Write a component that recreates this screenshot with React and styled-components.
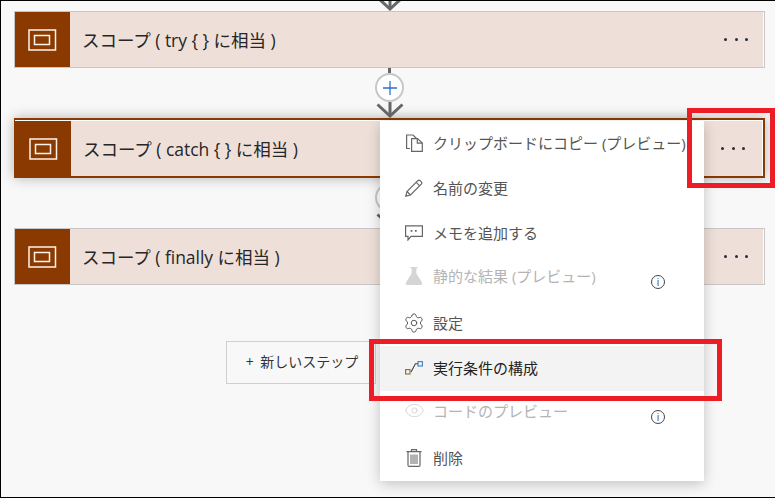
import styled, { createGlobalStyle } from "styled-components";
import { Settings, Eye } from "lucide-react";

const GlobalStyle = createGlobalStyle`
  html, body {
    margin: 0;
    padding: 0;
    background: #f8f8f8;
  }
  * {
    box-sizing: border-box;
  }
`;

const FONT = `"Open Sans", "Noto Sans CJK JP", sans-serif`;

const ScopeIcon = () => (
  <svg width="29" height="22" viewBox="0 0 29 22" fill="none" stroke="#fdf3ec" strokeWidth="1.5">
    <rect x="1" y="1" width="26.5" height="20" />
    <rect x="6.5" y="6.5" width="15" height="9" />
  </svg>
);

const Arrow = () => (
  <svg width="30" height="16" viewBox="0 0 30 16" fill="none" stroke="#666" strokeWidth="3">
    <path d="M2.5 2.5 L15 14 L27.5 2.5" />
    <path d="M15 0 V14" />
  </svg>
);

const Plus = () => (
  <svg width="14" height="14" viewBox="0 0 14 14" stroke="#2f6fd0" strokeWidth="1.3">
    <path d="M0 7 H14 M7 0 V14" />
  </svg>
);

const CopyIcon = () => (
  <svg width="18" height="18" viewBox="0 0 18 18" fill="none" stroke="#666" strokeWidth="1.2">
    <path d="M5 14.5 H1.6 V1 H8 L11.5 4.5" />
    <path d="M6.6 4.6 H12.5 L17.3 9 V17.4 H6.6 Z" />
    <path d="M12.3 4.6 V9.2 H17.3" />
  </svg>
);

const PencilIcon = () => (
  <svg width="18" height="18" viewBox="0 0 18 18" fill="none" stroke="#666" strokeWidth="1.2">
    <path d="M0.8 17.2 L2 12.5 L12.8 1.7 Q14 0.6 15.2 1.7 L16.3 2.8 Q17.4 4 16.3 5.2 L5.5 16 Z" />
    <path d="M11.2 3.3 L14.7 6.8 M2 12.5 L5.5 16" />
  </svg>
);

const CommentIcon = () => (
  <svg width="18" height="16" viewBox="0 0 18 16" fill="none" stroke="#666" strokeWidth="1.2">
    <path d="M0.6 0.8 H17.4 V11.4 H6 L3 15 V11.4 H0.6 Z" />
    <path d="M6.5 5 V6.8 M10.8 5 V6.8" strokeWidth="1.8" />
  </svg>
);

const FlaskIcon = () => (
  <svg width="18" height="18" viewBox="0 0 18 18" fill="#d5d5d5">
    <path d="M5.5 0 H12.5 V1.2 H11.4 V6.5 L17 15.6 Q18 18 15.5 18 H2.5 Q0 18 1 15.6 L6.6 6.5 V1.2 H5.5 Z" />
  </svg>
);

const RunAfterIcon = () => (
  <svg width="18" height="14" viewBox="0 0 18 14" fill="none" stroke="#444" strokeWidth="1.1">
    <rect x="0.6" y="8.6" width="4.4" height="4.4" stroke="#8a6a3a" />
    <rect x="13" y="0.6" width="4.4" height="4.4" stroke="#3f7fc0" />
    <path d="M6 11 L10.4 2.8 H13" />
  </svg>
);

const TrashIcon = () => (
  <svg width="16" height="18" viewBox="0 0 16 18" fill="none" stroke="#666" strokeWidth="1.2">
    <path d="M0.5 2.6 H15.5 M5.5 2.6 V0.7 H10.5 V2.6" />
    <path d="M2 2.6 V16.2 Q2 17.4 3.2 17.4 H12.8 Q14 17.4 14 16.2 V2.6" />
    <path d="M5 5.5 V15 M7 5.5 V15 M9 5.5 V15 M11 5.5 V15" strokeWidth="1" />
  </svg>
);

const menuItems = [
  { label: "クリップボードにコピー (プレビュー)", icon: <CopyIcon /> },
  { label: "名前の変更", icon: <PencilIcon /> },
  { label: "メモを追加する", icon: <CommentIcon /> },
  { label: "静的な結果 (プレビュー)", icon: <FlaskIcon />, disabled: true, info: true },
  { label: "設定", icon: <Settings size={22} strokeWidth={1.05} color="#555" /> },
  { label: "実行条件の構成", icon: <RunAfterIcon />, active: true },
  { label: "コードのプレビュー", icon: <Eye size={21} strokeWidth={1.1} color="#d5d5d5" />, disabled: true, info: true },
  { label: "削除", icon: <TrashIcon /> },
];

const ScopeCard = ({ title, selected, height }) => (
  <Card $selected={selected} $height={height}>
    <CardBody>
      <IconBlock $selected={selected}>
        <ScopeIcon />
      </IconBlock>
      <CardTitle>{title}</CardTitle>
      <MoreDots $selected={selected}>
        <i />
        <i />
        <i />
      </MoreDots>
    </CardBody>
  </Card>
);

const StepConnector = () => (
  <Connector>
    <Line />
    <PlusButton>
      <Plus />
    </PlusButton>
    <ArrowBox>
      <Arrow />
    </ArrowBox>
  </Connector>
);

const App = () => {
  return (
    <Page>
      <GlobalStyle />
      <Flow>
        <TopStub>
          <Arrow />
        </TopStub>
        <ScopeCard title="スコープ ( try { } に相当 )" height={57} />
        <StepConnector />
        <ScopeCard title="スコープ ( catch { } に相当 )" height={60} selected />
        <StepConnector />
        <ScopeCard title="スコープ ( finally に相当 )" height={57} />
        <NewStep>+ 新しいステップ</NewStep>
      </Flow>

      <Menu>
        {menuItems.map((item) => (
          <MenuItem key={item.label} $active={item.active} $disabled={item.disabled}>
            <MenuIcon>{item.icon}</MenuIcon>
            <span>{item.label}</span>
            {item.info && <InfoMark>i</InfoMark>}
          </MenuItem>
        ))}
      </Menu>

      <Callout $x={687} $y={108} $w={88} $h={80} />
      <Callout $x={369} $y={339} $w={353} $h={62} />
    </Page>
  );
};

const Page = styled.div`
  position: relative;
  width: 775px;
  height: 498px;
  overflow: hidden;
  background: #f8f8f8;
  border-top: 1px solid #000;
  border-left: 1px solid #000;
  border-bottom: 1px solid #000;
  font-family: ${FONT};
`;

const Flow = styled.div`
  display: flex;
  flex-direction: column;
  padding-left: 13px;
  width: 764px;
`;

const TopStub = styled.div`
  display: flex;
  justify-content: center;
  align-items: flex-end;
  height: 10px;
  overflow: hidden;
`;

const Card = styled.div`
  height: ${(p) => p.$height}px;
  padding: ${(p) => (p.$selected ? "1px 1px 0 0" : "0 1px 0 0")};
  background: #fff;
  border: ${(p) => (p.$selected ? "2px solid #8a3a00" : "1px solid #c8c6c6")};
  border-left-width: 1px;
  box-shadow: ${(p) => (p.$selected ? "0 0 12px rgba(0, 0, 0, 0.28)" : "none")};
  position: relative;
`;

const CardBody = styled.div`
  display: flex;
  align-items: center;
  height: 100%;
  background: #eee0d9;
`;

const IconBlock = styled.div`
  display: flex;
  align-items: center;
  justify-content: center;
  width: ${(p) => (p.$selected ? "56px" : "55px")};
  height: 100%;
  background: #8a3a00;
  flex: none;
`;

const CardTitle = styled.div`
  margin-left: 12px;
  font-size: 17.5px;
  letter-spacing: -0.04px;
  color: #262626;
  white-space: nowrap;
`;

const MoreDots = styled.div`
  display: flex;
  gap: 7.5px;
  margin-left: auto;
  margin-right: ${(p) => (p.$selected ? "17px" : "15px")};

  i {
    display: block;
    width: 3px;
    height: 3px;
    border-radius: 50%;
    background: #2a2a3a;
  }
`;

const Connector = styled.div`
  position: relative;
  z-index: 1;
  display: flex;
  flex-direction: column;
  align-items: center;
  height: 50px;
`;

const Line = styled.div`
  width: 3px;
  height: 5px;
  background: #666;
`;

const PlusButton = styled.div`
  display: flex;
  align-items: center;
  justify-content: center;
  width: 29px;
  height: 29px;
  border-radius: 50%;
  background: #fff;
  border: 2px solid #c8c8c8;
  flex: none;
`;

const ArrowBox = styled.div`
  display: flex;
  height: 16px;
`;

const NewStep = styled.div`
  display: flex;
  align-items: center;
  justify-content: center;
  width: 150px;
  height: 43px;
  margin: 56px 0 0 212px;
  padding: 0 0 3px 2px;
  border: 1px solid #d0d0d0;
  background: #f8f8f8;
  font-size: 14px;
  word-spacing: 3px;
  color: #333;
  white-space: nowrap;
`;

const Menu = styled.div`
  position: absolute;
  left: 379px;
  top: 120px;
  z-index: 2;
  width: 324px;
  background: #fff;
  border-radius: 2px;
  box-shadow: 0 3px 14px rgba(0, 0, 0, 0.22);
`;

const MenuItem = styled.div`
  display: flex;
  align-items: center;
  height: 45px;
  padding-left: 25px;
  padding-bottom: ${(p) => (p.$disabled ? "6px" : "2px")};
  font-size: 15px;
  white-space: nowrap;
  background: ${(p) => (p.$active ? "#f3f3f3" : "#fff")};
  color: ${(p) => (p.$active ? "#222" : p.$disabled ? "#b4b4b4" : "#555")};
`;

const MenuIcon = styled.div`
  display: flex;
  align-items: center;
  justify-content: center;
  width: 18px;
  margin-right: 10px;
  flex: none;

  svg {
    flex: none;
  }
`;

const InfoMark = styled.div`
  display: flex;
  align-items: center;
  justify-content: center;
  width: 14px;
  height: 14px;
  margin: 13px 39px 0 auto;
  border: 1px solid #444;
  border-radius: 50%;
  font-size: 10px;
  line-height: 1;
  color: #444;
`;

const Callout = styled.div`
  position: absolute;
  z-index: 3;
  left: ${(p) => p.$x - 1}px;
  top: ${(p) => p.$y - 1}px;
  width: ${(p) => p.$w}px;
  height: ${(p) => p.$h}px;
  border: 5px solid #ee1c25;
  pointer-events: none;
`;

export default App;
